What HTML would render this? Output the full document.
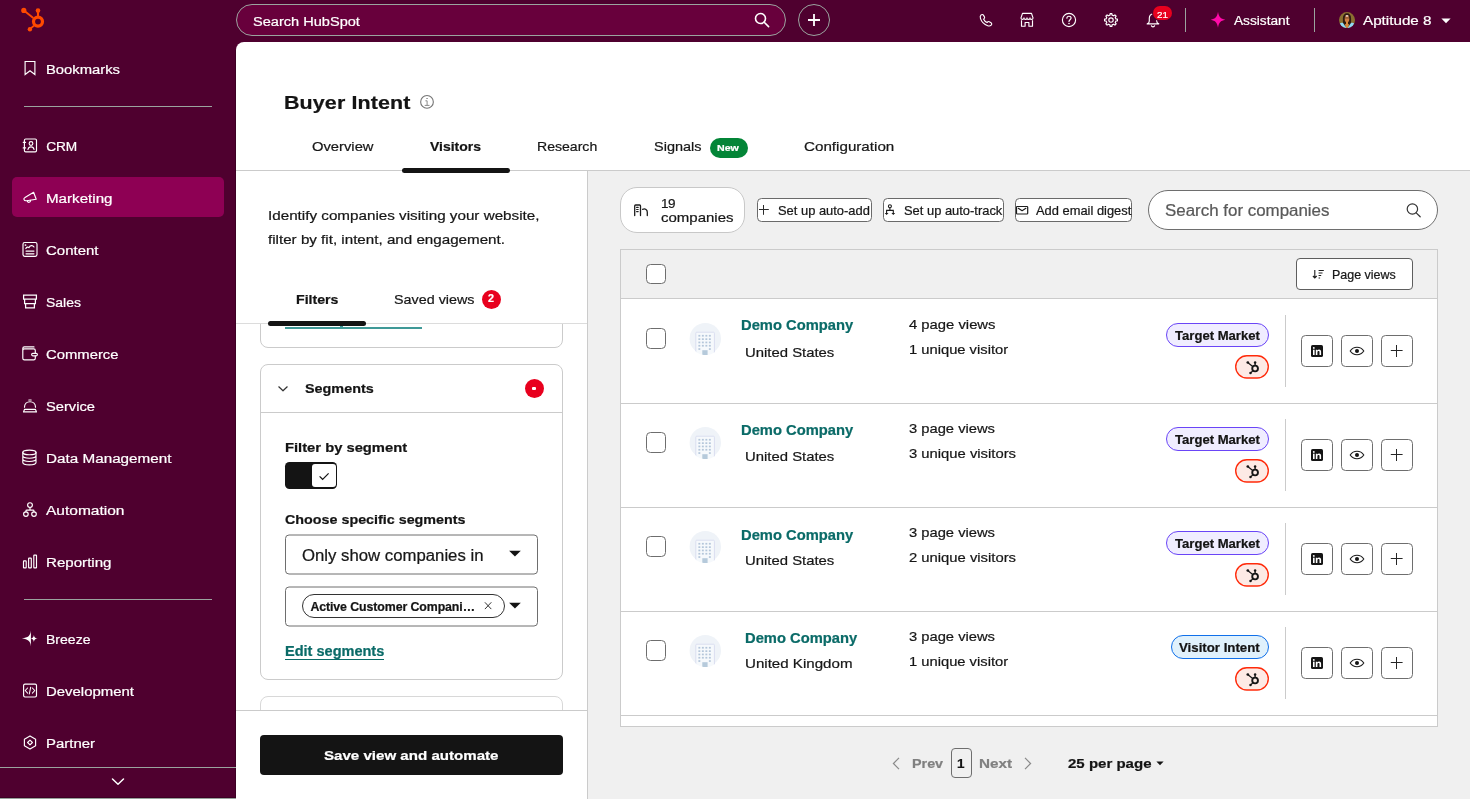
<!DOCTYPE html>
<html lang="en"><head><meta charset="utf-8"><title>Buyer Intent</title>
<style>
html,body{margin:0;padding:0;}
body{width:1470px;height:799px;overflow:hidden;position:relative;background:#4f002f;font-family:"Liberation Sans", sans-serif;}
body div,body svg,body span{position:absolute;box-sizing:border-box;}
.t{white-space:nowrap;line-height:1;transform:translateZ(0);transform-origin:0 50%;-webkit-text-stroke:0.22px currentColor;}
</style></head><body>
<div style="left:236px;top:42px;width:1234px;height:757px;background:#fff;border-top-left-radius:8px;"></div>
<svg style="left:18px;top:4px;" width="32" height="32" viewBox="0 0 32 32" fill="none"><g fill="#ff4a00" stroke="#ff4a00">
<circle cx="20" cy="17.6" r="4.5" fill="none" stroke-width="3.2"/>
<line x1="20" y1="12" x2="20" y2="7" stroke-width="2.1"/>
<circle cx="20" cy="6.6" r="2.3" stroke="none"/>
<line x1="15.3" y1="14" x2="6.2" y2="6.8" stroke-width="1.9"/>
<circle cx="5.8" cy="6.4" r="2.6" stroke="none"/>
<line x1="16" y1="21.6" x2="12.2" y2="24.9" stroke-width="1.9"/>
<circle cx="11.9" cy="25.2" r="2.2" stroke="none"/>
</g></svg>
<div style="left:236px;top:4px;width:550px;height:32px;background:#68003c;border:1px solid #9ba49f;border-radius:16px;"></div>
<span id="t0" class="t" style="left:253.00px;top:14.67px;font-size:13.7px;font-weight:400;color:#ffffff;letter-spacing:0.000px;transform:scaleX(1.0643) translateZ(0);">Search HubSpot</span>
<svg style="left:752px;top:10px;" width="20" height="20" viewBox="0 0 20 20" fill="none"><circle cx="8.5" cy="8.5" r="5" stroke="#fff" stroke-width="1.6"/><line x1="12.2" y1="12.2" x2="16.6" y2="16.6" stroke="#fff" stroke-width="1.6" stroke-linecap="round"/></svg>
<div style="left:798px;top:4px;width:32px;height:32px;border:1px solid #9ba49f;border-radius:16px;"></div>
<svg style="left:804px;top:10px;" width="20" height="20" viewBox="0 0 20 20" fill="none"><path d="M10 4v12M4 10h12" stroke="#fff" stroke-width="1.8"/></svg>
<svg style="left:976px;top:10px;" width="20" height="20" viewBox="0 0 20 20" fill="none"><path transform="translate(9.300 10.100) scale(.87) translate(-10 -10)" d="M5.2 4.1c.9-.9 2-.7 2.6.2l1.2 2c.4.7.3 1.400-.3 2l-.6.6c.7 1.500 2.400 3.200 3.900 3.900l.6-.6c.6-.6 1.300-.7 2-.3l2 1.200c.9.600 1.100 1.700.2 2.600-1.100 1.100-2.500 1.300-4 .8-3.600-1.200-7.300-4.900-8.400-8.400-.5-1.500-.3-2.900.8-4z" stroke="#fff" stroke-width="1.3" stroke-linejoin="round"/></svg>
<svg style="left:1017px;top:10px;" width="20" height="20" viewBox="0 0 20 20" fill="none"><g stroke="#fff" stroke-width="1.15" stroke-linejoin="round">
<path d="M5.500 3.400h9l1.500 4.500a1.500 1.500 0 0 1-3 0a1.500 1.500 0 0 1-3 0a1.500 1.500 0 0 1-3 0a1.500 1.500 0 0 1-3 0z"/>
<path d="M4.500 10.200v6h3.600v-3.700h3.800v3.700h3.600v-6"/></g></svg>
<svg style="left:1059px;top:10px;" width="20" height="20" viewBox="0 0 20 20" fill="none"><circle cx="10" cy="10" r="6.6" stroke="#fff" stroke-width="1.15"/><path d="M7.900 8.200c0-1.200.9-2 2.100-2s2.100.800 2.100 1.900c0 1.600-2.100 1.700-2.100 3.300" stroke="#fff" stroke-width="1.15" stroke-linecap="round"/><circle cx="10" cy="13.500" r=".8" fill="#fff"/></svg>
<svg style="left:1101px;top:10px;" width="20" height="20" viewBox="0 0 20 20" fill="none"><path d="M8.95 5.11 L9.13 3.56 L10.87 3.56 L11.05 5.11 L12.71 5.80 L13.94 4.83 L15.17 6.06 L14.20 7.29 L14.89 8.95 L16.44 9.13 L16.44 10.87 L14.89 11.05 L14.20 12.71 L15.17 13.94 L13.94 15.17 L12.71 14.20 L11.05 14.89 L10.87 16.44 L9.13 16.44 L8.95 14.89 L7.29 14.20 L6.06 15.17 L4.83 13.94 L5.80 12.71 L5.11 11.05 L3.56 10.87 L3.56 9.13 L5.11 8.95 L5.80 7.29 L4.83 6.06 L6.06 4.83 L7.29 5.80Z" stroke="#fff" stroke-width="1.15" stroke-linejoin="round"/><circle cx="10" cy="10" r="2.200" stroke="#fff" stroke-width="1.15"/></svg>
<svg style="left:1143px;top:9.6px;" width="20" height="20" viewBox="0 0 20 20" fill="none"><path d="M4.200 13.900c1.400-.5 2.100-1.400 2.100-2.900V8.200c0-2.400 1.500-4.200 3.700-4.200s3.700 1.800 3.700 4.200V11c0 1.500.7 2.400 2.100 2.900z" stroke="#fff" stroke-width="1.15" stroke-linejoin="round"/><path d="M8.300 15.400c.2.900.9 1.400 1.700 1.400s1.500-.5 1.700-1.400" stroke="#fff" stroke-width="1.15"/></svg>
<div style="left:1153px;top:6px;width:19px;height:14px;background:#e8001e;border-radius:7px;box-shadow:0 0 0 1px #4f002f;"></div>
<span id="t1" class="t" style="left:1157.10px;top:9.60px;font-size:9.84px;font-weight:400;color:#ffffff;letter-spacing:-0.069px;">21</span>
<div style="left:1185px;top:8px;width:1px;height:24px;background:#9ba49f;"></div>
<svg style="left:1208px;top:10px;" width="20" height="20" viewBox="0 0 20 20" fill="none"><path d="M10 1.800c.8 5 2.500 7.100 7.300 8-4.800.9-6.500 3-7.300 8-.8-5-2.500-7.100-7.300-8 4.800-.9 6.500-3 7.300-8z" fill="#ff0aa8"/></svg>
<span id="t2" class="t" style="left:1233.90px;top:13.86px;font-size:13.32px;font-weight:400;color:#ffffff;letter-spacing:0.000px;transform:scaleX(1.0275) translateZ(0);">Assistant</span>
<div style="left:1314px;top:8px;width:1px;height:24px;background:#9ba49f;"></div>
<svg style="left:1339px;top:12px;" width="16" height="16" viewBox="0 0 16 16" fill="none"><defs><clipPath id="av"><circle cx="8" cy="8.050" r="8"/></clipPath></defs>
<g clip-path="url(#av)"><rect width="16" height="17" fill="#8a6f30"/>
<path d="M3.900 13.800V6.400C3.900 3.200 5.500 1.200 8 1.200s4.100 2 4.100 5.200v7.400z" fill="#2e1a10"/>
<ellipse cx="8" cy="7" rx="2.300" ry="3.300" fill="#cf7e44"/>
<path d="M7 9.500h2v2.600l1.300.5L8 16.500l-2.300-3.900 1.300-.5z" fill="#d98a3c"/>
<ellipse cx="8" cy="3.800" rx="1.500" ry=".9" fill="#efd2c8"/>
<rect x="5.800" y="5.500" width="4.400" height=".9" fill="#4a2c20" opacity=".75"/>
<path d="M0 12.400c1.300-1.300 2.600-1.700 3.900-1.600L7.700 16.500H0z" fill="#8fdaf6"/>
<path d="M16 12.400c-1.300-1.300-2.600-1.700-3.900-1.600L8.300 16.500H16z" fill="#8fdaf6"/></g></svg>
<span id="t3" class="t" style="left:1362.90px;top:13.67px;font-size:13.7px;font-weight:400;color:#ffffff;letter-spacing:0.000px;transform:scaleX(1.1113) translateZ(0);">Aptitude 8</span>
<svg style="left:1441px;top:17.5px;" width="10" height="6" viewBox="0 0 10 6" fill="none"><path d="M.4.400h9.200L5 5.300z" fill="#fff"/></svg>
<div style="left:235px;top:50px;width:1px;height:749px;background:#3d0024;"></div>
<div style="left:12px;top:177px;width:212px;height:40px;background:#8e0054;border-radius:5px;"></div>
<svg style="left:20px;top:57.6px;" width="20" height="20" viewBox="0 0 20 20" fill="none"><g stroke="#fff" stroke-width="1.15" stroke-linejoin="round" stroke-linecap="round"><path d="M5.100 3.500h9.800v13l-4.900-3.700-4.900 3.700z" stroke-linejoin="miter"/></g></svg>
<span id="t4" class="t" style="left:46.20px;top:62.67px;font-size:13.7px;font-weight:400;color:#ffffff;letter-spacing:0.000px;transform:scaleX(1.0808) translateZ(0);">Bookmarks</span>
<svg style="left:20px;top:134.5px;" width="20" height="20" viewBox="0 0 20 20" fill="none"><g stroke="#fff" stroke-width="1.15" stroke-linejoin="round" stroke-linecap="round"><rect x="4.400" y="4" width="12.100" height="12.900" rx="1.300"/><path d="M3.200 7.300h2.400M3.200 12.900h2.400"/><circle cx="11" cy="8.500" r="1.850"/><path d="M8 14.500c.3-1.700 1.400-2.700 3-2.700s2.700 1 3 2.700"/></g></svg>
<span id="t5" class="t" style="left:46.20px;top:139.67px;font-size:13.7px;font-weight:400;color:#ffffff;letter-spacing:-0.157px;">CRM</span>
<svg style="left:20px;top:186.5px;" width="20" height="20" viewBox="0 0 20 20" fill="none"><g stroke="#fff" stroke-width="1.15" stroke-linejoin="round" stroke-linecap="round"><path d="M13.600 5.300 16.200 12.300 6.600 13.700c-1.400.2-2.300-.3-2.600-1.100-.3-.8.100-1.500 1-2z"/><path d="M7.300 13.800c.2 1.100 1 1.700 1.900 1.500.9-.2 1.400-.9 1.300-1.900"/></g></svg>
<span id="t6" class="t" style="left:46.20px;top:191.67px;font-size:13.7px;font-weight:400;color:#ffffff;letter-spacing:-0.000px;transform:scaleX(1.1063) translateZ(0);">Marketing</span>
<svg style="left:20px;top:238.5px;" width="20" height="20" viewBox="0 0 20 20" fill="none"><g stroke="#fff" stroke-width="1.15" stroke-linejoin="round" stroke-linecap="round"><rect x="3" y="3.500" width="14" height="13.800" rx="1.700"/><path d="M5.800 9.600c.8-1.600 2.200-1.900 3.200-1 .8-2.200 3.600-2.900 5-.6"/><circle cx="5.500" cy="6.100" r=".35"/><path d="M6 12.100h8M6 14.800h8"/></g></svg>
<span id="t7" class="t" style="left:46.20px;top:243.67px;font-size:13.7px;font-weight:400;color:#ffffff;letter-spacing:0.000px;transform:scaleX(1.0948) translateZ(0);">Content</span>
<svg style="left:20px;top:290.5px;" width="20" height="20" viewBox="0 0 20 20" fill="none"><g stroke="#fff" stroke-width="1.15" stroke-linejoin="round" stroke-linecap="round"><path d="M3.600 4.100h12.800v3.900H3.600zM4.600 8v4.600h10.800V8M5.600 12.600v4.300h8.800v-4.300" stroke-linejoin="miter" stroke-width="1.250"/></g></svg>
<span id="t8" class="t" style="left:46.20px;top:295.67px;font-size:13.7px;font-weight:400;color:#ffffff;letter-spacing:0.000px;transform:scaleX(1.0219) translateZ(0);">Sales</span>
<svg style="left:20px;top:342.5px;" width="20" height="20" viewBox="0 0 20 20" fill="none"><g stroke="#fff" stroke-width="1.15" stroke-linejoin="round" stroke-linecap="round"><path d="M15.300 10.300V7.500c0-.9-.7-1.600-1.600-1.600H4.400c-.9 0-1.600.7-1.600 1.600M15.300 12.900v2.400c0 .9-.7 1.600-1.600 1.600H4.400c-.9 0-1.600-.7-1.600-1.600V5.500c0-.9.700-1.600 1.600-1.600H14"/><rect x="11.600" y="10.400" width="5.800" height="2.400" rx="1.200"/></g></svg>
<span id="t9" class="t" style="left:46.20px;top:347.67px;font-size:13.7px;font-weight:400;color:#ffffff;letter-spacing:0.000px;transform:scaleX(1.0831) translateZ(0);">Commerce</span>
<svg style="left:20px;top:394.5px;" width="20" height="20" viewBox="0 0 20 20" fill="none"><g stroke="#fff" stroke-width="1.15" stroke-linejoin="round" stroke-linecap="round"><path d="M8.800 5h2.400M4.500 12.200c0-3.200 2.400-5.500 5.500-5.500s5.500 2.300 5.500 5.500M4.600 14.300h10.800l1.100 2.600H3.500z"/></g></svg>
<span id="t10" class="t" style="left:46.20px;top:399.67px;font-size:13.7px;font-weight:400;color:#ffffff;letter-spacing:0.000px;transform:scaleX(1.0736) translateZ(0);">Service</span>
<svg style="left:20px;top:446.5px;" width="20" height="20" viewBox="0 0 20 20" fill="none"><g stroke="#fff" stroke-width="1.15" stroke-linejoin="round" stroke-linecap="round"><ellipse cx="9.400" cy="5.400" rx="6.600" ry="2.300"/><path d="M2.800 5.400v10.100c0 1.300 3 2.400 6.600 2.400s6.600-1.100 6.600-2.400V5.400M2.800 8.800c0 1.300 3 2.400 6.600 2.400s6.600-1.100 6.600-2.400M2.800 12.100c0 1.300 3 2.400 6.600 2.400s6.600-1.100 6.600-2.400"/></g></svg>
<span id="t11" class="t" style="left:46.20px;top:451.67px;font-size:13.7px;font-weight:400;color:#ffffff;letter-spacing:0.000px;transform:scaleX(1.1145) translateZ(0);">Data Management</span>
<svg style="left:20px;top:498.5px;" width="20" height="20" viewBox="0 0 20 20" fill="none"><g stroke="#fff" stroke-width="1.15" stroke-linejoin="round" stroke-linecap="round"><circle cx="10" cy="6.100" r="2.400"/><circle cx="5.900" cy="15.100" r="2.300"/><circle cx="14" cy="15.100" r="2.300"/><path d="M10 8.500v2.600M5.900 12.800v-.8c0-.5.400-.9.900-.9h6.300c.5 0 .9.400.9.900v.8"/></g></svg>
<span id="t12" class="t" style="left:46.20px;top:503.67px;font-size:13.7px;font-weight:400;color:#ffffff;letter-spacing:0.000px;transform:scaleX(1.1336) translateZ(0);">Automation</span>
<svg style="left:20px;top:550.5px;" width="20" height="20" viewBox="0 0 20 20" fill="none"><g stroke="#fff" stroke-width="1.15" stroke-linejoin="round" stroke-linecap="round"><rect x="3.500" y="9.900" width="2.700" height="7" rx=".5"/><rect x="8.600" y="7.100" width="2.700" height="9.800" rx=".5"/><rect x="13.800" y="4.100" width="2.700" height="12.800" rx=".5"/></g></svg>
<span id="t13" class="t" style="left:46.20px;top:555.67px;font-size:13.7px;font-weight:400;color:#ffffff;letter-spacing:0.000px;transform:scaleX(1.1034) translateZ(0);">Reporting</span>
<svg style="left:20px;top:628.5px;" width="20" height="20" viewBox="0 0 20 20" fill="none"><path d="M10.900 1.600C10.400 6.800 8.200 8.800 1.900 9.500c6.300.7 8.500 2.700 9 7.900z" fill="#fff"/><path d="M13.900 5.900c.3 2.400 1.200 3.300 3.800 3.600-2.600.3-3.500 1.200-3.800 3.600-.3-2.400-1.200-3.300-3.800-3.600 2.600-.3 3.500-1.200 3.800-3.600z" fill="#fff"/></svg>
<span id="t14" class="t" style="left:46.20px;top:632.67px;font-size:13.7px;font-weight:400;color:#ffffff;letter-spacing:0.000px;transform:scaleX(1.0259) translateZ(0);">Breeze</span>
<svg style="left:20px;top:679.5px;" width="20" height="20" viewBox="0 0 20 20" fill="none"><g stroke="#fff" stroke-width="1.15" stroke-linejoin="round" stroke-linecap="round"><rect x="3.600" y="4.100" width="12.900" height="12.900" rx="1.400"/><path d="M7.600 8 5.200 10.500l2.400 2.600M12.400 8l2.400 2.500-2.400 2.600M10.700 7.200 9.300 14" stroke-width="1.050"/></g></svg>
<span id="t15" class="t" style="left:46.20px;top:684.67px;font-size:13.7px;font-weight:400;color:#ffffff;letter-spacing:0.000px;transform:scaleX(1.0910) translateZ(0);">Development</span>
<svg style="left:20px;top:731.5px;" width="20" height="20" viewBox="0 0 20 20" fill="none"><g stroke="#fff" stroke-width="1.15" stroke-linejoin="round" stroke-linecap="round"><path d="M10 3.900l5.600 3.300v6.600L10 17.100l-5.600-3.300V7.200z"/><path d="M10 8.100 12.400 10.500 10 12.900 7.600 10.500z"/></g></svg>
<span id="t16" class="t" style="left:46.20px;top:736.67px;font-size:13.7px;font-weight:400;color:#ffffff;letter-spacing:-0.000px;transform:scaleX(1.0915) translateZ(0);">Partner</span>
<div style="left:24px;top:106px;width:188px;height:1px;background:#9ba49f;"></div>
<div style="left:24px;top:599px;width:188px;height:1px;background:#9ba49f;"></div>
<div style="left:0px;top:767px;width:236px;height:1px;background:#9ba49f;"></div>
<div style="left:0px;top:797px;width:236px;height:1px;background:#3d0024;"></div>
<div style="left:0px;top:798px;width:236px;height:1px;background:#98a29c;"></div>
<svg style="left:110px;top:774px;" width="16" height="16" viewBox="0 0 16 16" fill="none"><path d="M2.500 5l5.500 5.200L13.500 5" stroke="#fff" stroke-width="1.500" stroke-linecap="round" stroke-linejoin="round"/></svg>
<span id="t17" class="t" style="left:284.40px;top:94.11px;font-size:18.82px;font-weight:700;color:#141414;letter-spacing:0.100px;transform:scaleX(1.1400) translateZ(0);">Buyer Intent</span>
<svg style="left:419px;top:94px;" width="16" height="16" viewBox="0 0 16 16" fill="none"><circle cx="8" cy="7.900" r="6.350" stroke="#757575" stroke-width="1.100"/><path d="M7.300 4.500h1.500M6.400 6.800h1.700v4.400M5.700 11.400h4.800" stroke="#8a8a8a" stroke-width="1"/></svg>
<span id="t18" class="t" style="left:311.80px;top:139.77px;font-size:13.51px;font-weight:400;color:#171717;letter-spacing:0.000px;transform:scaleX(1.0930) translateZ(0);">Overview</span>
<span id="t19" class="t" style="left:430.00px;top:139.77px;font-size:13.51px;font-weight:700;color:#141414;letter-spacing:0.000px;transform:scaleX(1.0349) translateZ(0);">Visitors</span>
<span id="t20" class="t" style="left:537.40px;top:139.77px;font-size:13.51px;font-weight:400;color:#171717;letter-spacing:0.000px;transform:scaleX(1.0419) translateZ(0);">Research</span>
<span id="t21" class="t" style="left:654.00px;top:139.77px;font-size:13.51px;font-weight:400;color:#171717;letter-spacing:0.000px;transform:scaleX(1.0727) translateZ(0);">Signals</span>
<div style="left:709.5px;top:137.5px;width:38px;height:20px;background:#038537;border-radius:10px;"></div>
<span id="t22" class="t" style="left:717.20px;top:142.70px;font-size:9.65px;font-weight:700;color:#ffffff;letter-spacing:0.000px;transform:scaleX(1.1062) translateZ(0);">New</span>
<span id="t23" class="t" style="left:803.60px;top:139.77px;font-size:13.51px;font-weight:400;color:#171717;letter-spacing:0.000px;transform:scaleX(1.1244) translateZ(0);">Configuration</span>
<div style="left:236px;top:170px;width:1234px;height:1px;background:#cbcbcb;"></div>
<div style="left:402px;top:167.5px;width:107.5px;height:5px;background:#141414;border-radius:2.5px;"></div>
<div style="left:588px;top:171px;width:882px;height:628px;background:#f0f0f0;"></div>
<div style="left:587px;top:171px;width:1px;height:628px;background:#cbcbcb;"></div>
<span id="t24" class="t" style="left:267.80px;top:208.77px;font-size:13.51px;font-weight:400;color:#171717;letter-spacing:0.000px;transform:scaleX(1.1271) translateZ(0);">Identify companies visiting your website,</span>
<span id="t25" class="t" style="left:267.80px;top:232.77px;font-size:13.51px;font-weight:400;color:#171717;letter-spacing:0.000px;transform:scaleX(1.1238) translateZ(0);">filter by fit, intent, and engagement.</span>
<span id="t26" class="t" style="left:296.00px;top:292.76px;font-size:13.51px;font-weight:700;color:#141414;letter-spacing:0.000px;transform:scaleX(1.0490) translateZ(0);">Filters</span>
<span id="t27" class="t" style="left:394.40px;top:292.76px;font-size:13.51px;font-weight:400;color:#171717;letter-spacing:0.000px;transform:scaleX(1.0620) translateZ(0);">Saved views</span>
<div style="left:482px;top:289.5px;width:19px;height:19px;background:#e8001e;border-radius:10px;"></div>
<span id="t28" class="t" style="left:488.10px;top:294.40px;font-size:10.23px;font-weight:700;color:#ffffff;letter-spacing:0.000px;transform:scaleX(1.0549) translateZ(0);">2</span>
<div style="left:236px;top:323px;width:351px;height:388px;overflow:hidden;">
<div style="left:24px;top:-40px;width:303px;height:65px;border:1px solid #cbcbcb;border-radius:8px;background:#fff;"></div>
<div style="left:49px;top:4px;width:137px;height:1.5px;background:#3f9997;"></div>
<div style="left:104px;top:2px;width:3px;height:2px;background:#3f9997;"></div>
<div style="left:24px;top:41px;width:303px;height:315.5px;border:1px solid #cbcbcb;border-radius:8px;background:#fff;"></div>
<div style="left:24px;top:89px;width:303px;height:1px;background:#cbcbcb;"></div>
<div style="left:24px;top:373px;width:303px;height:80px;border:1px solid #d8d8d8;border-radius:8px;background:#fff;"></div>
</div>
<div style="left:236px;top:323px;width:351px;height:1px;background:#dcdcdc;"></div>
<div style="left:268px;top:320.5px;width:98px;height:5px;background:#141414;border-radius:2.5px;"></div>
<svg style="left:276px;top:382px;" width="14" height="14" viewBox="0 0 14 14" fill="none"><path d="M2.800 4.800 7 8.800l4.200-4" stroke="#333" stroke-width="1.200" stroke-linecap="round" stroke-linejoin="round"/></svg>
<span id="t29" class="t" style="left:304.80px;top:381.76px;font-size:13.51px;font-weight:700;color:#141414;letter-spacing:0.000px;transform:scaleX(1.0646) translateZ(0);">Segments</span>
<div style="left:524.5px;top:379px;width:19px;height:19px;background:#e8001e;border-radius:10px;"></div>
<div style="left:532.3px;top:386.8px;width:3.4px;height:3.4px;background:#fff;border-radius:1px;"></div>
<span id="t30" class="t" style="left:284.80px;top:440.76px;font-size:13.51px;font-weight:700;color:#141414;letter-spacing:0.000px;transform:scaleX(1.0923) translateZ(0);">Filter by segment</span>
<div style="left:285px;top:462px;width:52px;height:26.5px;background:#141414;border-radius:4.500px;"></div>
<div style="left:312px;top:464px;width:24px;height:23px;background:#fff;border-radius:3px;"></div>
<svg style="left:317px;top:468.5px;" width="14" height="14" viewBox="0 0 14 14" fill="none"><path d="M2.600 7.400 5.600 10.300 11.600 4.300" stroke="#141414" stroke-width="1.200"/></svg>
<span id="t31" class="t" style="left:284.60px;top:512.76px;font-size:13.51px;font-weight:700;color:#141414;letter-spacing:0.000px;transform:scaleX(1.0598) translateZ(0);">Choose specific segments</span>
<div style="left:285px;top:535px;width:253px;height:40px;border:1px solid #6e6e6e;border-radius:4px;background:#fff;transform:translateY(-.5px);"></div>
<span id="t32" class="t" style="left:301.70px;top:547.70px;font-size:15.63px;font-weight:400;color:#171717;letter-spacing:0.000px;transform:scaleX(1.0717) translateZ(0);">Only show companies in</span>
<svg style="left:508px;top:550px;" width="14" height="8" viewBox="0 0 14 8" fill="none"><path d="M1.100.8h11.700L6.950 6.600z" fill="#141414"/></svg>
<div style="left:285px;top:587px;width:253px;height:40px;border:1px solid #6e6e6e;border-radius:4px;background:#fff;transform:translateY(-.5px);"></div>
<div style="left:301.7px;top:593.5px;width:203px;height:24px;border:1px solid #333;border-radius:12px;"></div>
<span id="t33" class="t" style="left:310.40px;top:600.85px;font-size:12.35px;font-weight:700;color:#141414;letter-spacing:-0.090px;">Active Customer Compani…</span>
<svg style="left:483px;top:601px;" width="10" height="10" viewBox="0 0 10 10" fill="none"><path d="M1.900 1.300l6.400 6.800M8.300 1.300 1.900 8.100" stroke="#333" stroke-width="1"/></svg>
<svg style="left:508px;top:602px;" width="14" height="8" viewBox="0 0 14 8" fill="none"><path d="M1.100.8h11.700L6.950 6.600z" fill="#141414"/></svg>
<span id="t34" class="t" style="left:284.60px;top:644.62px;font-size:13.8px;font-weight:700;color:#0b6b68;letter-spacing:-0.000px;transform:scaleX(1.0529) translateZ(0);">Edit segments</span>
<div style="left:285px;top:658.7px;width:99px;height:1.3px;background:#0b6b68;"></div>
<div style="left:236px;top:710px;width:351px;height:1px;background:#cbcbcb;"></div>
<div style="left:260px;top:735px;width:303px;height:40px;background:#141414;border-radius:4px;"></div>
<span id="t35" class="t" style="left:324.00px;top:748.76px;font-size:13.51px;font-weight:700;color:#ffffff;letter-spacing:0.000px;transform:scaleX(1.1181) translateZ(0);">Save view and automate</span>
<div style="left:620px;top:187px;width:125px;height:46px;background:#fff;border:1px solid #c8c8c8;border-radius:17px;"></div>
<svg style="left:632px;top:203px;" width="18" height="14" viewBox="0 0 18 14" fill="none"><g stroke="#1c1c1c" stroke-width="1.300" stroke-linecap="round"><path d="M2.700 12.600V2.900c0-.6.300-.9.900-.900h4c.6 0 .9.300.9.900v9.700"/><path d="M4.600 4.400h1.600M4.600 6.500h1.600M4.600 8.600h1.600" stroke-width="1.100"/><path d="M10.600 6.300c2.800-1 4.700.4 4.700 2.900v3.400"/></g></svg>
<span id="t36" class="t" style="left:661.00px;top:196.77px;font-size:13.51px;font-weight:400;color:#171717;letter-spacing:-0.566px;">19</span>
<span id="t37" class="t" style="left:661.00px;top:210.77px;font-size:13.51px;font-weight:400;color:#171717;letter-spacing:0.000px;transform:scaleX(1.1103) translateZ(0);">companies</span>
<div style="left:757px;top:198px;width:114.5px;height:24px;background:#fff;border:1px solid #6a6a6a;border-radius:4.500px;"></div>
<svg style="left:758px;top:204px" width="12" height="12" viewBox="0 0 12 12"><path d="M5.500 1v9.800M1 5.500h9.800" stroke="#2a2a2a" stroke-width="1"/></svg>
<span id="t38" class="t" style="left:778.00px;top:204.84px;font-size:12.35px;font-weight:400;color:#171717;letter-spacing:0.000px;transform:scaleX(1.0460) translateZ(0);">Set up auto-add</span>
<div style="left:883px;top:198px;width:120.5px;height:24px;background:#fff;border:1px solid #6a6a6a;border-radius:4.500px;"></div>
<svg style="left:884px;top:203px" width="12" height="13" viewBox="0 0 12 13" fill="none"><g stroke="#1c1c1c" stroke-width="1.100"><circle cx="5.900" cy="3.200" r="1.500"/><path d="M5.900 4.700v2.700M2.600 10.800V7.400h6.700v3.400"/></g><path d="M.7 9.900h3.800L2.600 12zM7.400 9.900h3.800L9.300 12z" fill="#1c1c1c"/></svg>
<span id="t39" class="t" style="left:904.00px;top:204.84px;font-size:12.35px;font-weight:400;color:#171717;letter-spacing:0.000px;transform:scaleX(1.0456) translateZ(0);">Set up auto-track</span>
<div style="left:1015px;top:198px;width:116.5px;height:24px;background:#fff;border:1px solid #6a6a6a;border-radius:4.500px;"></div>
<svg style="left:1015px;top:205px" width="14" height="11" viewBox="0 0 14 11" fill="none"><g stroke="#1c1c1c" stroke-width="1.200" stroke-linejoin="round" stroke-linecap="round"><rect x="1.500" y="1.500" width="11.200" height="7.500" rx=".8"/><path d="M3.300 3.300 7.100 5.700 10.900 3.300"/></g></svg>
<span id="t40" class="t" style="left:1035.60px;top:204.84px;font-size:12.35px;font-weight:400;color:#171717;letter-spacing:0.000px;transform:scaleX(1.0442) translateZ(0);">Add email digest</span>
<div style="left:1148px;top:190px;width:290px;height:40px;background:#fff;border:1px solid #6e6e6e;border-radius:20px;"></div>
<span id="t41" class="t" style="left:1165.00px;top:202.71px;font-size:15.63px;font-weight:400;color:#595959;letter-spacing:0.000px;transform:scaleX(1.0822) translateZ(0);">Search for companies</span>
<svg style="left:1405px;top:202px;" width="17" height="16" viewBox="0 0 17 16" fill="none"><circle cx="7.400" cy="7" r="5.200" stroke="#333" stroke-width="1.200"/><path d="M11.200 10.900 15.200 14.800" stroke="#333" stroke-width="1.200" stroke-linecap="round"/></svg>
<div style="left:620px;top:249px;width:818px;height:478px;border:1px solid #cbcbcb;background:#fff;"></div>
<div style="left:621px;top:250px;width:816px;height:48px;background:#f0f0f0;"></div>
<div style="left:646px;top:264px;width:20px;height:20px;background:#fff;border:1px solid #6e6e6e;border-radius:4.500px;"></div>
<div style="left:1295.5px;top:258px;width:117.5px;height:32px;background:#fff;border:1px solid #5e5e5e;border-radius:4px;"></div>
<svg style="left:1312px;top:268px;" width="14" height="12" viewBox="0 0 14 12" fill="none"><g stroke="#1c1c1c" stroke-width="1.100"><path d="M2.800 2v8M.9 8l1.900 2 1.900-2"/><path d="M6.600 2.500h5.200M6.600 5h3.900M6.600 7.500h2.600M6.600 10h1.500"/></g></svg>
<span id="t42" class="t" style="left:1331.90px;top:268.84px;font-size:12.35px;font-weight:400;color:#171717;letter-spacing:0.000px;transform:scaleX(1.0107) translateZ(0);">Page views</span>
<div style="left:621px;top:298px;width:816px;height:1px;background:#cbcbcb;"></div>
<div style="left:646px;top:328px;width:20px;height:20.5px;background:#fff;border:1px solid #6e6e6e;border-radius:4.500px;"></div>
<svg style="left:689px;top:322px;" width="33" height="33" viewBox="0 0 33 33" fill="none"><defs><clipPath id="cb0"><circle cx="16.300" cy="16.700" r="15.700"/></clipPath></defs><circle cx="16.300" cy="16.700" r="15.700" fill="#eff3f8"/><g clip-path="url(#cb0)" transform="translate(.3 .7)"><rect x="6.500" y="9.500" width="18.600" height="26" rx="1" fill="#f6f9fc" stroke="#dadef0" stroke-width="1"/><g fill="#b4c6da"><rect x="9.1" y="12.2" width="1.900" height="1.700"/><rect x="12.6" y="12.2" width="1.900" height="1.700"/><rect x="16.1" y="12.2" width="1.900" height="1.700"/><rect x="19.6" y="12.2" width="1.900" height="1.700"/><rect x="9.1" y="15.6" width="1.900" height="1.700"/><rect x="12.6" y="15.6" width="1.900" height="1.700"/><rect x="16.1" y="15.6" width="1.900" height="1.700"/><rect x="19.6" y="15.6" width="1.900" height="1.700"/><rect x="9.1" y="18.9" width="1.900" height="1.700"/><rect x="12.6" y="18.9" width="1.900" height="1.700"/><rect x="16.1" y="18.9" width="1.900" height="1.700"/><rect x="19.6" y="18.9" width="1.900" height="1.700"/><rect x="9.1" y="22.2" width="1.900" height="1.700"/><rect x="12.6" y="22.2" width="1.900" height="1.700"/><rect x="16.1" y="22.2" width="1.900" height="1.700"/><rect x="19.6" y="22.2" width="1.900" height="1.700"/><rect x="9.1" y="25.5" width="1.900" height="1.700"/><rect x="19.6" y="25.5" width="1.900" height="1.700"/><rect x="13" y="27.500" width="5.300" height="6" fill="#b6cadb"/></g></g></svg>
<span id="t43" class="t" style="left:740.80px;top:318.62px;font-size:13.8px;font-weight:700;color:#0b6b68;letter-spacing:0.000px;transform:scaleX(1.0673) translateZ(0);">Demo Company</span>
<span id="t44" class="t" style="left:745.00px;top:345.76px;font-size:13.51px;font-weight:400;color:#171717;letter-spacing:0.000px;transform:scaleX(1.1018) translateZ(0);">United States</span>
<span id="t45" class="t" style="left:908.60px;top:317.76px;font-size:13.51px;font-weight:400;color:#171717;letter-spacing:0.000px;transform:scaleX(1.0975) translateZ(0);">4 page views</span>
<span id="t46" class="t" style="left:908.60px;top:342.76px;font-size:13.51px;font-weight:400;color:#171717;letter-spacing:0.000px;transform:scaleX(1.0913) translateZ(0);">1 unique visitor</span>
<div style="left:1166px;top:323px;width:103px;height:24px;background:#f0edff;border:1px solid #6a45f7;border-radius:12px;"></div>
<span id="t47" class="t" style="left:1175.00px;top:329.84px;font-size:12.35px;font-weight:700;color:#141414;letter-spacing:-0.000px;transform:scaleX(1.0608) translateZ(0);">Target Market</span>
<svg style="left:1235px;top:355px;" width="34" height="24" viewBox="0 0 34 24" fill="none"><rect x=".7" y=".7" width="32.600" height="22.300" rx="11.150" fill="#fdeae5" stroke="#ff2a0a" stroke-width="1.350"/>
<g fill="#161616" stroke="#161616" transform="translate(8.800 3.200)"><circle cx="11.300" cy="10.300" r="2.850" fill="none" stroke-width="1.900"/>
<line x1="8.900" y1="8.300" x2="4.200" y2="4.500" stroke-width="1.250"/><circle cx="4" cy="4.300" r="1.350" stroke="none"/>
<line x1="11.300" y1="7" x2="11.300" y2="4.400" stroke-width="1.350"/><circle cx="11.300" cy="4.200" r="1.250" stroke="none"/>
<line x1="9.100" y1="12.600" x2="6.900" y2="14.700" stroke-width="1.250"/><circle cx="6.700" cy="14.900" r="1.250" stroke="none"/></g></svg>
<div style="left:1285px;top:315px;width:1px;height:72px;background:#cbcbcb;"></div>
<div style="left:1301px;top:335px;width:32px;height:32px;background:#fff;border:1px solid #6e6e6e;border-radius:4.500px;"></div>
<div style="left:1341px;top:335px;width:32px;height:32px;background:#fff;border:1px solid #6e6e6e;border-radius:4.500px;"></div>
<div style="left:1381px;top:335px;width:32px;height:32px;background:#fff;border:1px solid #6e6e6e;border-radius:4.500px;"></div>
<svg style="left:1311px;top:345px;" width="12" height="12" viewBox="0 0 12 12" fill="none"><rect width="12" height="12" rx="1.600" fill="#141414"/><g fill="#fff"><rect x="2" y="4.700" width="1.600" height="5.300"/><circle cx="2.800" cy="2.900" r=".95"/><path d="M4.800 4.700h1.500v.8c.4-.6 1-.95 1.800-.95 1.400 0 2 .9 2 2.300V10H8.500V7.200c0-.7-.25-1.200-.9-1.200-.7 0-1.200.5-1.200 1.300V10H4.800z"/></g></svg>
<svg style="left:1349px;top:344px;" width="16" height="14" viewBox="0 0 16 14" fill="none"><path d="M1.200 7c1.600-2.400 4-3.700 6.800-3.700S13.200 4.600 14.800 7c-1.600 2.400-4 3.700-6.800 3.700S2.800 9.400 1.200 7z" stroke="#1c1c1c" stroke-width="1.100"/><circle cx="8" cy="7" r="2" fill="#141414"/></svg>
<svg style="left:1390px;top:344px;" width="14" height="14" viewBox="0 0 14 14" fill="none"><path d="M6.500 1v12M.8 6.500h11.800" stroke="#262626" stroke-width="1"/></svg>
<div style="left:621px;top:403px;width:816px;height:1px;background:#cbcbcb;"></div>
<div style="left:646px;top:432px;width:20px;height:20.5px;background:#fff;border:1px solid #6e6e6e;border-radius:4.500px;"></div>
<svg style="left:689px;top:426px;" width="33" height="33" viewBox="0 0 33 33" fill="none"><defs><clipPath id="cb1"><circle cx="16.300" cy="16.700" r="15.700"/></clipPath></defs><circle cx="16.300" cy="16.700" r="15.700" fill="#eff3f8"/><g clip-path="url(#cb1)" transform="translate(.3 .7)"><rect x="6.500" y="9.500" width="18.600" height="26" rx="1" fill="#f6f9fc" stroke="#dadef0" stroke-width="1"/><g fill="#b4c6da"><rect x="9.1" y="12.2" width="1.900" height="1.700"/><rect x="12.6" y="12.2" width="1.900" height="1.700"/><rect x="16.1" y="12.2" width="1.900" height="1.700"/><rect x="19.6" y="12.2" width="1.900" height="1.700"/><rect x="9.1" y="15.6" width="1.900" height="1.700"/><rect x="12.6" y="15.6" width="1.900" height="1.700"/><rect x="16.1" y="15.6" width="1.900" height="1.700"/><rect x="19.6" y="15.6" width="1.900" height="1.700"/><rect x="9.1" y="18.9" width="1.900" height="1.700"/><rect x="12.6" y="18.9" width="1.900" height="1.700"/><rect x="16.1" y="18.9" width="1.900" height="1.700"/><rect x="19.6" y="18.9" width="1.900" height="1.700"/><rect x="9.1" y="22.2" width="1.900" height="1.700"/><rect x="12.6" y="22.2" width="1.900" height="1.700"/><rect x="16.1" y="22.2" width="1.900" height="1.700"/><rect x="19.6" y="22.2" width="1.900" height="1.700"/><rect x="9.1" y="25.5" width="1.900" height="1.700"/><rect x="19.6" y="25.5" width="1.900" height="1.700"/><rect x="13" y="27.500" width="5.300" height="6" fill="#b6cadb"/></g></g></svg>
<span id="t48" class="t" style="left:740.80px;top:423.62px;font-size:13.8px;font-weight:700;color:#0b6b68;letter-spacing:0.000px;transform:scaleX(1.0673) translateZ(0);">Demo Company</span>
<span id="t49" class="t" style="left:745.00px;top:449.76px;font-size:13.51px;font-weight:400;color:#171717;letter-spacing:0.000px;transform:scaleX(1.1018) translateZ(0);">United States</span>
<span id="t50" class="t" style="left:908.60px;top:421.76px;font-size:13.51px;font-weight:400;color:#171717;letter-spacing:0.000px;transform:scaleX(1.0912) translateZ(0);">3 page views</span>
<span id="t51" class="t" style="left:908.60px;top:446.76px;font-size:13.51px;font-weight:400;color:#171717;letter-spacing:0.000px;transform:scaleX(1.0967) translateZ(0);">3 unique visitors</span>
<div style="left:1166px;top:427px;width:103px;height:24px;background:#f0edff;border:1px solid #6a45f7;border-radius:12px;"></div>
<span id="t52" class="t" style="left:1175.00px;top:433.84px;font-size:12.35px;font-weight:700;color:#141414;letter-spacing:-0.000px;transform:scaleX(1.0608) translateZ(0);">Target Market</span>
<svg style="left:1235px;top:459px;" width="34" height="24" viewBox="0 0 34 24" fill="none"><rect x=".7" y=".7" width="32.600" height="22.300" rx="11.150" fill="#fdeae5" stroke="#ff2a0a" stroke-width="1.350"/>
<g fill="#161616" stroke="#161616" transform="translate(8.800 3.200)"><circle cx="11.300" cy="10.300" r="2.850" fill="none" stroke-width="1.900"/>
<line x1="8.900" y1="8.300" x2="4.200" y2="4.500" stroke-width="1.250"/><circle cx="4" cy="4.300" r="1.350" stroke="none"/>
<line x1="11.300" y1="7" x2="11.300" y2="4.400" stroke-width="1.350"/><circle cx="11.300" cy="4.200" r="1.250" stroke="none"/>
<line x1="9.100" y1="12.600" x2="6.900" y2="14.700" stroke-width="1.250"/><circle cx="6.700" cy="14.900" r="1.250" stroke="none"/></g></svg>
<div style="left:1285px;top:419px;width:1px;height:72px;background:#cbcbcb;"></div>
<div style="left:1301px;top:439px;width:32px;height:32px;background:#fff;border:1px solid #6e6e6e;border-radius:4.500px;"></div>
<div style="left:1341px;top:439px;width:32px;height:32px;background:#fff;border:1px solid #6e6e6e;border-radius:4.500px;"></div>
<div style="left:1381px;top:439px;width:32px;height:32px;background:#fff;border:1px solid #6e6e6e;border-radius:4.500px;"></div>
<svg style="left:1311px;top:449px;" width="12" height="12" viewBox="0 0 12 12" fill="none"><rect width="12" height="12" rx="1.600" fill="#141414"/><g fill="#fff"><rect x="2" y="4.700" width="1.600" height="5.300"/><circle cx="2.800" cy="2.900" r=".95"/><path d="M4.800 4.700h1.500v.8c.4-.6 1-.95 1.800-.95 1.400 0 2 .9 2 2.300V10H8.500V7.200c0-.7-.25-1.200-.9-1.200-.7 0-1.200.5-1.200 1.300V10H4.800z"/></g></svg>
<svg style="left:1349px;top:448px;" width="16" height="14" viewBox="0 0 16 14" fill="none"><path d="M1.200 7c1.600-2.400 4-3.700 6.800-3.700S13.200 4.600 14.800 7c-1.600 2.400-4 3.700-6.800 3.700S2.800 9.400 1.200 7z" stroke="#1c1c1c" stroke-width="1.100"/><circle cx="8" cy="7" r="2" fill="#141414"/></svg>
<svg style="left:1390px;top:448px;" width="14" height="14" viewBox="0 0 14 14" fill="none"><path d="M6.500 1v12M.8 6.500h11.800" stroke="#262626" stroke-width="1"/></svg>
<div style="left:621px;top:507px;width:816px;height:1px;background:#cbcbcb;"></div>
<div style="left:646px;top:536px;width:20px;height:20.5px;background:#fff;border:1px solid #6e6e6e;border-radius:4.500px;"></div>
<svg style="left:689px;top:530px;" width="33" height="33" viewBox="0 0 33 33" fill="none"><defs><clipPath id="cb2"><circle cx="16.300" cy="16.700" r="15.700"/></clipPath></defs><circle cx="16.300" cy="16.700" r="15.700" fill="#eff3f8"/><g clip-path="url(#cb2)" transform="translate(.3 .7)"><rect x="6.500" y="9.500" width="18.600" height="26" rx="1" fill="#f6f9fc" stroke="#dadef0" stroke-width="1"/><g fill="#b4c6da"><rect x="9.1" y="12.2" width="1.900" height="1.700"/><rect x="12.6" y="12.2" width="1.900" height="1.700"/><rect x="16.1" y="12.2" width="1.900" height="1.700"/><rect x="19.6" y="12.2" width="1.900" height="1.700"/><rect x="9.1" y="15.6" width="1.900" height="1.700"/><rect x="12.6" y="15.6" width="1.900" height="1.700"/><rect x="16.1" y="15.6" width="1.900" height="1.700"/><rect x="19.6" y="15.6" width="1.900" height="1.700"/><rect x="9.1" y="18.9" width="1.900" height="1.700"/><rect x="12.6" y="18.9" width="1.900" height="1.700"/><rect x="16.1" y="18.9" width="1.900" height="1.700"/><rect x="19.6" y="18.9" width="1.900" height="1.700"/><rect x="9.1" y="22.2" width="1.900" height="1.700"/><rect x="12.6" y="22.2" width="1.900" height="1.700"/><rect x="16.1" y="22.2" width="1.900" height="1.700"/><rect x="19.6" y="22.2" width="1.900" height="1.700"/><rect x="9.1" y="25.5" width="1.900" height="1.700"/><rect x="19.6" y="25.5" width="1.900" height="1.700"/><rect x="13" y="27.500" width="5.300" height="6" fill="#b6cadb"/></g></g></svg>
<span id="t53" class="t" style="left:740.80px;top:528.62px;font-size:13.8px;font-weight:700;color:#0b6b68;letter-spacing:0.000px;transform:scaleX(1.0673) translateZ(0);">Demo Company</span>
<span id="t54" class="t" style="left:745.00px;top:553.76px;font-size:13.51px;font-weight:400;color:#171717;letter-spacing:0.000px;transform:scaleX(1.1018) translateZ(0);">United States</span>
<span id="t55" class="t" style="left:908.60px;top:525.76px;font-size:13.51px;font-weight:400;color:#171717;letter-spacing:0.000px;transform:scaleX(1.0912) translateZ(0);">3 page views</span>
<span id="t56" class="t" style="left:908.60px;top:550.76px;font-size:13.51px;font-weight:400;color:#171717;letter-spacing:0.000px;transform:scaleX(1.0967) translateZ(0);">2 unique visitors</span>
<div style="left:1166px;top:531px;width:103px;height:24px;background:#f0edff;border:1px solid #6a45f7;border-radius:12px;"></div>
<span id="t57" class="t" style="left:1175.00px;top:537.85px;font-size:12.35px;font-weight:700;color:#141414;letter-spacing:-0.000px;transform:scaleX(1.0608) translateZ(0);">Target Market</span>
<svg style="left:1235px;top:563px;" width="34" height="24" viewBox="0 0 34 24" fill="none"><rect x=".7" y=".7" width="32.600" height="22.300" rx="11.150" fill="#fdeae5" stroke="#ff2a0a" stroke-width="1.350"/>
<g fill="#161616" stroke="#161616" transform="translate(8.800 3.200)"><circle cx="11.300" cy="10.300" r="2.850" fill="none" stroke-width="1.900"/>
<line x1="8.900" y1="8.300" x2="4.200" y2="4.500" stroke-width="1.250"/><circle cx="4" cy="4.300" r="1.350" stroke="none"/>
<line x1="11.300" y1="7" x2="11.300" y2="4.400" stroke-width="1.350"/><circle cx="11.300" cy="4.200" r="1.250" stroke="none"/>
<line x1="9.100" y1="12.600" x2="6.900" y2="14.700" stroke-width="1.250"/><circle cx="6.700" cy="14.900" r="1.250" stroke="none"/></g></svg>
<div style="left:1285px;top:523px;width:1px;height:72px;background:#cbcbcb;"></div>
<div style="left:1301px;top:543px;width:32px;height:32px;background:#fff;border:1px solid #6e6e6e;border-radius:4.500px;"></div>
<div style="left:1341px;top:543px;width:32px;height:32px;background:#fff;border:1px solid #6e6e6e;border-radius:4.500px;"></div>
<div style="left:1381px;top:543px;width:32px;height:32px;background:#fff;border:1px solid #6e6e6e;border-radius:4.500px;"></div>
<svg style="left:1311px;top:553px;" width="12" height="12" viewBox="0 0 12 12" fill="none"><rect width="12" height="12" rx="1.600" fill="#141414"/><g fill="#fff"><rect x="2" y="4.700" width="1.600" height="5.300"/><circle cx="2.800" cy="2.900" r=".95"/><path d="M4.800 4.700h1.500v.8c.4-.6 1-.95 1.800-.95 1.400 0 2 .9 2 2.300V10H8.500V7.200c0-.7-.25-1.200-.9-1.200-.7 0-1.200.5-1.200 1.300V10H4.800z"/></g></svg>
<svg style="left:1349px;top:552px;" width="16" height="14" viewBox="0 0 16 14" fill="none"><path d="M1.200 7c1.600-2.400 4-3.700 6.800-3.700S13.200 4.600 14.800 7c-1.600 2.400-4 3.700-6.800 3.700S2.800 9.400 1.200 7z" stroke="#1c1c1c" stroke-width="1.100"/><circle cx="8" cy="7" r="2" fill="#141414"/></svg>
<svg style="left:1390px;top:552px;" width="14" height="14" viewBox="0 0 14 14" fill="none"><path d="M6.500 1v12M.8 6.500h11.800" stroke="#262626" stroke-width="1"/></svg>
<div style="left:621px;top:611px;width:816px;height:1px;background:#cbcbcb;"></div>
<div style="left:646px;top:640px;width:20px;height:20.5px;background:#fff;border:1px solid #6e6e6e;border-radius:4.500px;"></div>
<svg style="left:689px;top:634px;" width="33" height="33" viewBox="0 0 33 33" fill="none"><defs><clipPath id="cb3"><circle cx="16.300" cy="16.700" r="15.700"/></clipPath></defs><circle cx="16.300" cy="16.700" r="15.700" fill="#eff3f8"/><g clip-path="url(#cb3)" transform="translate(.3 .7)"><rect x="6.500" y="9.500" width="18.600" height="26" rx="1" fill="#f6f9fc" stroke="#dadef0" stroke-width="1"/><g fill="#b4c6da"><rect x="9.1" y="12.2" width="1.900" height="1.700"/><rect x="12.6" y="12.2" width="1.900" height="1.700"/><rect x="16.1" y="12.2" width="1.900" height="1.700"/><rect x="19.6" y="12.2" width="1.900" height="1.700"/><rect x="9.1" y="15.6" width="1.900" height="1.700"/><rect x="12.6" y="15.6" width="1.900" height="1.700"/><rect x="16.1" y="15.6" width="1.900" height="1.700"/><rect x="19.6" y="15.6" width="1.900" height="1.700"/><rect x="9.1" y="18.9" width="1.900" height="1.700"/><rect x="12.6" y="18.9" width="1.900" height="1.700"/><rect x="16.1" y="18.9" width="1.900" height="1.700"/><rect x="19.6" y="18.9" width="1.900" height="1.700"/><rect x="9.1" y="22.2" width="1.900" height="1.700"/><rect x="12.6" y="22.2" width="1.900" height="1.700"/><rect x="16.1" y="22.2" width="1.900" height="1.700"/><rect x="19.6" y="22.2" width="1.900" height="1.700"/><rect x="9.1" y="25.5" width="1.900" height="1.700"/><rect x="19.6" y="25.5" width="1.900" height="1.700"/><rect x="13" y="27.500" width="5.300" height="6" fill="#b6cadb"/></g></g></svg>
<span id="t58" class="t" style="left:744.80px;top:631.62px;font-size:13.8px;font-weight:700;color:#0b6b68;letter-spacing:0.000px;transform:scaleX(1.0673) translateZ(0);">Demo Company</span>
<span id="t59" class="t" style="left:745.00px;top:656.76px;font-size:13.51px;font-weight:400;color:#171717;letter-spacing:0.000px;transform:scaleX(1.1191) translateZ(0);">United Kingdom</span>
<span id="t60" class="t" style="left:908.60px;top:629.76px;font-size:13.51px;font-weight:400;color:#171717;letter-spacing:0.000px;transform:scaleX(1.0912) translateZ(0);">3 page views</span>
<span id="t61" class="t" style="left:908.60px;top:654.76px;font-size:13.51px;font-weight:400;color:#171717;letter-spacing:0.000px;transform:scaleX(1.0913) translateZ(0);">1 unique visitor</span>
<div style="left:1170.5px;top:635px;width:98.5px;height:24px;background:#e0f1fc;border:1px solid #1070ea;border-radius:12px;"></div>
<span id="t62" class="t" style="left:1179.00px;top:641.85px;font-size:12.35px;font-weight:700;color:#141414;letter-spacing:0.000px;transform:scaleX(1.0729) translateZ(0);">Visitor Intent</span>
<svg style="left:1235px;top:667px;" width="34" height="24" viewBox="0 0 34 24" fill="none"><rect x=".7" y=".7" width="32.600" height="22.300" rx="11.150" fill="#fdeae5" stroke="#ff2a0a" stroke-width="1.350"/>
<g fill="#161616" stroke="#161616" transform="translate(8.800 3.200)"><circle cx="11.300" cy="10.300" r="2.850" fill="none" stroke-width="1.900"/>
<line x1="8.900" y1="8.300" x2="4.200" y2="4.500" stroke-width="1.250"/><circle cx="4" cy="4.300" r="1.350" stroke="none"/>
<line x1="11.300" y1="7" x2="11.300" y2="4.400" stroke-width="1.350"/><circle cx="11.300" cy="4.200" r="1.250" stroke="none"/>
<line x1="9.100" y1="12.600" x2="6.900" y2="14.700" stroke-width="1.250"/><circle cx="6.700" cy="14.900" r="1.250" stroke="none"/></g></svg>
<div style="left:1285px;top:627px;width:1px;height:72px;background:#cbcbcb;"></div>
<div style="left:1301px;top:647px;width:32px;height:32px;background:#fff;border:1px solid #6e6e6e;border-radius:4.500px;"></div>
<div style="left:1341px;top:647px;width:32px;height:32px;background:#fff;border:1px solid #6e6e6e;border-radius:4.500px;"></div>
<div style="left:1381px;top:647px;width:32px;height:32px;background:#fff;border:1px solid #6e6e6e;border-radius:4.500px;"></div>
<svg style="left:1311px;top:657px;" width="12" height="12" viewBox="0 0 12 12" fill="none"><rect width="12" height="12" rx="1.600" fill="#141414"/><g fill="#fff"><rect x="2" y="4.700" width="1.600" height="5.300"/><circle cx="2.800" cy="2.900" r=".95"/><path d="M4.800 4.700h1.500v.8c.4-.6 1-.95 1.800-.95 1.400 0 2 .9 2 2.300V10H8.500V7.200c0-.7-.25-1.200-.9-1.200-.7 0-1.200.5-1.200 1.300V10H4.800z"/></g></svg>
<svg style="left:1349px;top:656px;" width="16" height="14" viewBox="0 0 16 14" fill="none"><path d="M1.200 7c1.600-2.400 4-3.700 6.800-3.700S13.200 4.600 14.800 7c-1.600 2.400-4 3.700-6.800 3.700S2.800 9.400 1.200 7z" stroke="#1c1c1c" stroke-width="1.100"/><circle cx="8" cy="7" r="2" fill="#141414"/></svg>
<svg style="left:1390px;top:656px;" width="14" height="14" viewBox="0 0 14 14" fill="none"><path d="M6.500 1v12M.8 6.500h11.800" stroke="#262626" stroke-width="1"/></svg>
<div style="left:621px;top:715px;width:816px;height:1px;background:#cbcbcb;"></div>
<svg style="left:891px;top:756px;" width="10" height="15" viewBox="0 0 10 15" fill="none"><path d="M8 1.800 2.400 7.500 8 13.200" stroke="#8a8a8a" stroke-width="1.200"/></svg>
<span id="t63" class="t" style="left:911.80px;top:756.76px;font-size:13.51px;font-weight:700;color:#808080;letter-spacing:0.000px;transform:scaleX(1.0621) translateZ(0);">Prev</span>
<div style="left:950.5px;top:748px;width:21px;height:29.5px;border:1px solid #6e6e6e;border-radius:4px;"></div>
<span id="t64" class="t" style="left:957.00px;top:756.76px;font-size:13.51px;font-weight:700;color:#141414;letter-spacing:-0.516px;">1</span>
<span id="t65" class="t" style="left:978.90px;top:756.76px;font-size:13.51px;font-weight:700;color:#808080;letter-spacing:0.000px;transform:scaleX(1.1276) translateZ(0);">Next</span>
<svg style="left:1023px;top:756px;" width="10" height="15" viewBox="0 0 10 15" fill="none"><path d="M2 1.800 7.600 7.500 2 13.200" stroke="#8a8a8a" stroke-width="1.200"/></svg>
<span id="t66" class="t" style="left:1067.90px;top:756.76px;font-size:13.51px;font-weight:700;color:#141414;letter-spacing:0.000px;transform:scaleX(1.1126) translateZ(0);">25 per page</span>
<svg style="left:1156px;top:761px;" width="8" height="5" viewBox="0 0 8 5" fill="none"><path d="M.4.500h7.200L4 4.300z" fill="#141414"/></svg>
</body></html>
